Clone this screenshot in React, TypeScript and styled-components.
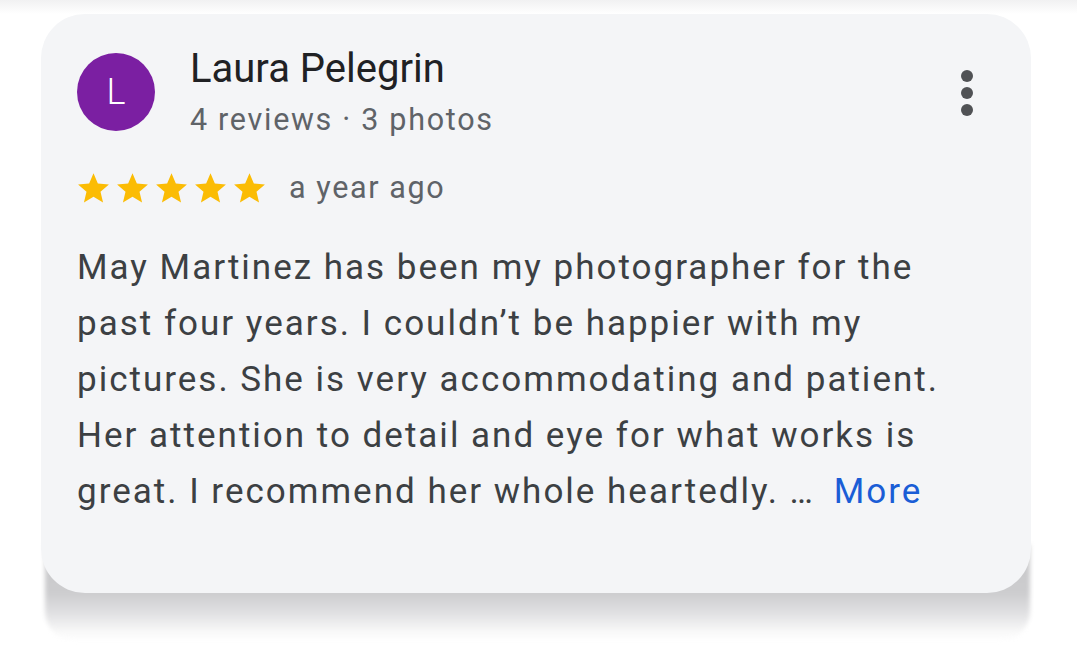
import React, { FC } from "react";
import styled, { createGlobalStyle } from "styled-components";

const GlobalStyle = createGlobalStyle`
  html, body {
    margin: 0;
    padding: 0;
    background: #ffffff;
    font-family: Roboto, "Liberation Sans", sans-serif;
  }
`;

const Star: FC = () => (
  <svg width="31" height="30" viewBox="1.2 1.4 21.6 21">
    <path
      fill="#fbbc04"
      d="M12 1.6l3.05 7.2 7.75.62-5.9 5.08 1.8 7.6L12 18.05 5.3 22.1l1.8-7.6-5.9-5.08 7.75-.62z"
    />
  </svg>
);

const App: FC = () => {
  return (
    <Page>
      <GlobalStyle />
      <TopFade />
      <Stack>
        <Card>
          <Header>
            <Avatar>L</Avatar>
            <Info>
              <Name>Laura Pelegrin</Name>
              <Meta>4 reviews · 3 photos</Meta>
            </Info>
            <Kebab aria-label="More options">
              <span />
              <span />
              <span />
            </Kebab>
          </Header>
          <RatingRow>
            <Stars>
              <Star />
              <Star />
              <Star />
              <Star />
              <Star />
            </Stars>
            <When>a year ago</When>
          </RatingRow>
          <Body>
            May Martinez has been my photographer for the
            <br />
            past four years. I couldn’t be happier with my
            <br />
            pictures. She is very accommodating and patient.
            <br />
            Her attention to detail and eye for what works is
            <br />
            great. I recommend her whole heartedly. …{" "}
            <MoreLink>More</MoreLink>
          </Body>
        </Card>
        <Shade />
      </Stack>
    </Page>
  );
};

const Page = styled.div`
  width: 1077px;
  height: 661px;
  overflow: hidden;
  background: #ffffff;
`;

const TopFade = styled.div`
  height: 14px;
  background: linear-gradient(#f1f1f2, #ffffff);
`;

const Stack = styled.div`
  display: flex;
  flex-direction: column;
  margin: 0 46px 0 41px;
`;

const Card = styled.div`
  position: relative;
  z-index: 1;
  height: 579px;
  box-sizing: border-box;
  padding: 39px 36px 0 36px;
  background: #f4f5f7;
  border-radius: 44px;
`;

const Shade = styled.div`
  height: 96px;
  margin: -48px 1px 0 4px;
  border-radius: 0 0 30px 30px;
  background: linear-gradient(
    #c6c6c8 0%,
    #cdcdcf 50%,
    #e2e2e4 72%,
    #f8f8f8 90%,
    #ffffff 100%
  );
  filter: blur(2px);
`;

const Header = styled.div`
  display: flex;
  align-items: flex-start;
`;

const Avatar = styled.div`
  width: 78px;
  height: 78px;
  border-radius: 50%;
  background: #7b1fa2;
  color: #ffffff;
  font-size: 36px;
  font-weight: 300;
  display: flex;
  align-items: center;
  justify-content: center;
  flex-shrink: 0;
`;

const Info = styled.div`
  display: flex;
  flex-direction: column;
  margin-left: 35px;
  margin-top: -10px;
  flex: 1;
`;

const Name = styled.div`
  font-size: 40px;
  line-height: 52px;
  color: #202124;
`;

const Meta = styled.div`
  font-size: 30.5px;
  line-height: 40px;
  letter-spacing: 1.7px;
  margin-top: 5px;
  color: #5f6368;
`;

const Kebab = styled.div`
  display: flex;
  flex-direction: column;
  gap: 5px;
  margin: 17px 22px 0 0;

  span {
    width: 12px;
    height: 12px;
    border-radius: 50%;
    background: #505255;
  }
`;

const RatingRow = styled.div`
  display: flex;
  align-items: center;
  margin-top: 30px;
  margin-left: 1px;
`;

const Stars = styled.div`
  display: flex;
  gap: 8px;
`;

const When = styled.span`
  margin-left: 24px;
  font-size: 30.5px;
  letter-spacing: 1.6px;
  color: #5f6368;
`;

const Body = styled.p`
  margin: 35px 0 0 0;
  font-size: 35px;
  line-height: 56px;
  letter-spacing: 2px;
  color: #3c4043;
`;

const MoreLink = styled.span`
  color: #1a5dd6;
  margin-left: 8px;
`;

export default App;
